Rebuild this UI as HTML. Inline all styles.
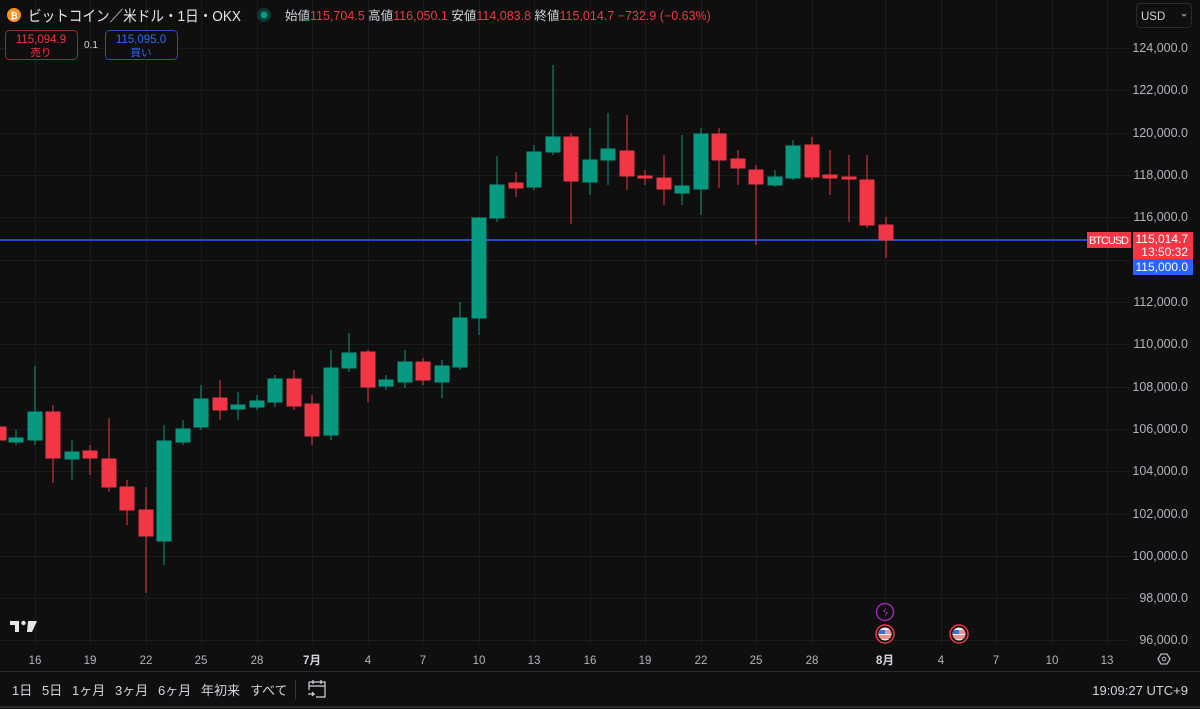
<!DOCTYPE html>
<html><head><meta charset="utf-8"><style>
html,body{margin:0;padding:0;background:#0f0f0f;width:1200px;height:709px;overflow:hidden;font-family:"Liberation Sans","Noto Sans CJK JP",sans-serif;color:#d1d4dc}
.a{position:absolute}
</style></head><body>
<svg class="a" style="left:0;top:0" width="1200" height="709" xmlns="http://www.w3.org/2000/svg" font-family="Liberation Sans, Noto Sans CJK JP, sans-serif">
<g stroke="#1b1b1b" stroke-width="1">
<line x1="0" x2="1130" y1="48.5" y2="48.5"/><line x1="0" x2="1130" y1="90.5" y2="90.5"/><line x1="0" x2="1130" y1="133.5" y2="133.5"/><line x1="0" x2="1130" y1="175.5" y2="175.5"/><line x1="0" x2="1130" y1="217.5" y2="217.5"/><line x1="0" x2="1130" y1="260.5" y2="260.5"/><line x1="0" x2="1130" y1="302.5" y2="302.5"/><line x1="0" x2="1130" y1="344.5" y2="344.5"/><line x1="0" x2="1130" y1="387.5" y2="387.5"/><line x1="0" x2="1130" y1="429.5" y2="429.5"/><line x1="0" x2="1130" y1="471.5" y2="471.5"/><line x1="0" x2="1130" y1="514.5" y2="514.5"/><line x1="0" x2="1130" y1="556.5" y2="556.5"/><line x1="0" x2="1130" y1="598.5" y2="598.5"/><line x1="0" x2="1130" y1="640.5" y2="640.5"/>
<line y1="0" y2="645" x1="35.5" x2="35.5"/><line y1="0" y2="645" x1="90.5" x2="90.5"/><line y1="0" y2="645" x1="146.5" x2="146.5"/><line y1="0" y2="645" x1="201.5" x2="201.5"/><line y1="0" y2="645" x1="257.5" x2="257.5"/><line y1="0" y2="645" x1="312.5" x2="312.5"/><line y1="0" y2="645" x1="368.5" x2="368.5"/><line y1="0" y2="645" x1="423.5" x2="423.5"/><line y1="0" y2="645" x1="479.5" x2="479.5"/><line y1="0" y2="645" x1="534.5" x2="534.5"/><line y1="0" y2="645" x1="590.5" x2="590.5"/><line y1="0" y2="645" x1="645.5" x2="645.5"/><line y1="0" y2="645" x1="701.5" x2="701.5"/><line y1="0" y2="645" x1="756.5" x2="756.5"/><line y1="0" y2="645" x1="812.5" x2="812.5"/><line y1="0" y2="645" x1="885.5" x2="885.5"/><line y1="0" y2="645" x1="941.5" x2="941.5"/><line y1="0" y2="645" x1="996.5" x2="996.5"/><line y1="0" y2="645" x1="1052.5" x2="1052.5"/><line y1="0" y2="645" x1="1107.5" x2="1107.5"/>
</g>
<line x1="0" x2="1130" y1="240" y2="240" stroke="#2962ff" stroke-width="1.5"/>
<g fill="#f23645" stroke="#f23645" stroke-width="1">
<rect x="-4" y="427" width="10" height="13"/>
<line x1="53" x2="53" y1="405" y2="483"/><rect x="46" y="412" width="14" height="46"/>
<line x1="90" x2="90" y1="445" y2="475"/><rect x="83" y="451" width="14" height="7"/>
<line x1="109" x2="109" y1="418" y2="492"/><rect x="102" y="459" width="14" height="28"/>
<line x1="127" x2="127" y1="480" y2="525"/><rect x="120" y="487" width="14" height="23"/>
<line x1="146" x2="146" y1="487" y2="593"/><rect x="139" y="510" width="14" height="26"/>
<line x1="220" x2="220" y1="380" y2="420"/><rect x="213" y="398" width="14" height="12"/>
<line x1="294" x2="294" y1="370" y2="410"/><rect x="287" y="379" width="14" height="27"/>
<line x1="312" x2="312" y1="395" y2="445"/><rect x="305" y="404" width="14" height="32"/>
<line x1="368" x2="368" y1="350" y2="402"/><rect x="361" y="352" width="14" height="35"/>
<line x1="423" x2="423" y1="358" y2="385"/><rect x="416" y="362" width="14" height="18"/>
<line x1="516" x2="516" y1="172" y2="197"/><rect x="509" y="183" width="14" height="5"/>
<line x1="571" x2="571" y1="133" y2="224"/><rect x="564" y="137" width="14" height="44"/>
<line x1="627" x2="627" y1="115" y2="190"/><rect x="620" y="151" width="14" height="25"/>
<line x1="645" x2="645" y1="170" y2="185"/><rect x="638" y="176" width="14" height="2"/>
<line x1="664" x2="664" y1="155" y2="205"/><rect x="657" y="178" width="14" height="11"/>
<line x1="719" x2="719" y1="128" y2="188"/><rect x="712" y="134" width="14" height="26"/>
<line x1="738" x2="738" y1="150" y2="185"/><rect x="731" y="159" width="14" height="9"/>
<line x1="756" x2="756" y1="165" y2="245"/><rect x="749" y="170" width="14" height="14"/>
<line x1="812" x2="812" y1="137" y2="180"/><rect x="805" y="145" width="14" height="32"/>
<line x1="830" x2="830" y1="150" y2="195"/><rect x="823" y="175" width="14" height="3"/>
<line x1="849" x2="849" y1="155" y2="222"/><rect x="842" y="177" width="14" height="2"/>
<line x1="867" x2="867" y1="155" y2="228"/><rect x="860" y="180" width="14" height="45"/>
<line x1="886" x2="886" y1="217" y2="258"/><rect x="879" y="225" width="14" height="15"/>
</g>
<g fill="#089981" stroke="#089981" stroke-width="1">
<line x1="16" x2="16" y1="430" y2="445"/><rect x="9" y="438" width="14" height="4"/>
<line x1="35" x2="35" y1="366" y2="445"/><rect x="28" y="412" width="14" height="28"/>
<line x1="72" x2="72" y1="440" y2="480"/><rect x="65" y="452" width="14" height="7"/>
<line x1="164" x2="164" y1="425" y2="565"/><rect x="157" y="441" width="14" height="100"/>
<line x1="183" x2="183" y1="420" y2="445"/><rect x="176" y="429" width="14" height="13"/>
<line x1="201" x2="201" y1="385" y2="430"/><rect x="194" y="399" width="14" height="28"/>
<line x1="238" x2="238" y1="392" y2="420"/><rect x="231" y="405" width="14" height="4"/>
<line x1="257" x2="257" y1="395" y2="410"/><rect x="250" y="401" width="14" height="6"/>
<line x1="275" x2="275" y1="375" y2="407"/><rect x="268" y="379" width="14" height="23"/>
<line x1="331" x2="331" y1="350" y2="440"/><rect x="324" y="368" width="14" height="67"/>
<line x1="349" x2="349" y1="333" y2="372"/><rect x="342" y="353" width="14" height="15"/>
<line x1="386" x2="386" y1="375" y2="390"/><rect x="379" y="380" width="14" height="6"/>
<line x1="405" x2="405" y1="350" y2="388"/><rect x="398" y="362" width="14" height="20"/>
<line x1="442" x2="442" y1="360" y2="398"/><rect x="435" y="366" width="14" height="16"/>
<line x1="460" x2="460" y1="302" y2="370"/><rect x="453" y="318" width="14" height="49"/>
<line x1="479" x2="479" y1="217" y2="335"/><rect x="472" y="218" width="14" height="100"/>
<line x1="497" x2="497" y1="156" y2="222"/><rect x="490" y="185" width="14" height="33"/>
<line x1="534" x2="534" y1="145" y2="190"/><rect x="527" y="152" width="14" height="35"/>
<line x1="553" x2="553" y1="65" y2="155"/><rect x="546" y="137" width="14" height="15"/>
<line x1="590" x2="590" y1="128" y2="195"/><rect x="583" y="160" width="14" height="22"/>
<line x1="608" x2="608" y1="113" y2="185"/><rect x="601" y="149" width="14" height="11"/>
<line x1="682" x2="682" y1="135" y2="205"/><rect x="675" y="186" width="14" height="7"/>
<line x1="701" x2="701" y1="128" y2="215"/><rect x="694" y="134" width="14" height="55"/>
<line x1="775" x2="775" y1="170" y2="187"/><rect x="768" y="177" width="14" height="8"/>
<line x1="793" x2="793" y1="140" y2="180"/><rect x="786" y="146" width="14" height="32"/>
</g>
<g fill="#b2b5be" font-size="12.5" text-anchor="end">
<text x="1188" y="52">124,000.0</text><text x="1188" y="94">122,000.0</text><text x="1188" y="137">120,000.0</text><text x="1188" y="179">118,000.0</text><text x="1188" y="221">116,000.0</text><text x="1188" y="306">112,000.0</text><text x="1188" y="348">110,000.0</text><text x="1188" y="391">108,000.0</text><text x="1188" y="433">106,000.0</text><text x="1188" y="475">104,000.0</text><text x="1188" y="518">102,000.0</text><text x="1188" y="560">100,000.0</text><text x="1188" y="602">98,000.0</text><text x="1188" y="644">96,000.0</text>
</g>
<rect x="1087" y="232" width="44" height="16" fill="#f23645"/>
<text x="1109" y="244" fill="#fff" font-size="11" text-anchor="middle" textLength="40">BTCUSD</text>
<rect x="1133" y="232" width="60" height="27" fill="#f23645"/>
<text x="1188" y="243" fill="#fff" font-size="12" text-anchor="end">115,014.7</text>
<text x="1188" y="256" fill="#fff" font-size="12" text-anchor="end">13:50:32</text>
<rect x="1133" y="259" width="60" height="16" fill="#2962ff"/>
<text x="1188" y="271" fill="#fff" font-size="12" text-anchor="end">115,000.0</text>
<rect x="1136.5" y="3.5" width="55" height="24" rx="4" fill="none" stroke="#2a2a2a"/>
<text x="1141" y="20" fill="#d1d4dc" font-size="11.5">USD</text>
<path d="M1182 14l2 2 2-2" stroke="#b2b5be" fill="none"/>
<g fill="#b2b5be" font-size="11.5" text-anchor="middle">
<text x="35" y="664">16</text><text x="90" y="664">19</text><text x="146" y="664">22</text><text x="201" y="664">25</text><text x="257" y="664">28</text><text x="312" y="664" font-weight="bold" fill="#d1d4dc">7月</text><text x="368" y="664">4</text><text x="423" y="664">7</text><text x="479" y="664">10</text><text x="534" y="664">13</text><text x="590" y="664">16</text><text x="645" y="664">19</text><text x="701" y="664">22</text><text x="756" y="664">25</text><text x="812" y="664">28</text><text x="885" y="664" font-weight="bold" fill="#d1d4dc">8月</text><text x="941" y="664">4</text><text x="996" y="664">7</text><text x="1052" y="664">10</text><text x="1107" y="664">13</text>
</g>
<path d="M1158 659l3-5h6l3 5-3 5h-6z" fill="none" stroke="#b2b5be" stroke-width="1.3"/>
<circle cx="1164" cy="659" r="1.8" fill="none" stroke="#b2b5be"/>
<line x1="0" x2="1200" y1="671.5" y2="671.5" stroke="#2a2a2a"/>
<line x1="0" x2="1200" y1="707" y2="707" stroke="#2a2a2a" stroke-width="2"/>
<circle cx="885" cy="612" r="8.5" fill="#0f0f0f" stroke="#9c27b0" stroke-width="1.5"/>
<path d="M886 607l-3 5h3l-1 5 3-5h-3z" fill="#9c27b0"/>
<circle cx="885" cy="634" r="9" fill="#0f0f0f" stroke="#f23645" stroke-width="1.5"/>
<circle cx="885" cy="634" r="6.5" fill="#eee"/><path d="M879 630h6v4h-6z" fill="#3c6fd8"/><path d="M885 631h6M885 633h6M879 636h12M880 638h10" stroke="#e53935" stroke-width="1"/>
<circle cx="959" cy="634" r="9" fill="#0f0f0f" stroke="#f23645" stroke-width="1.5"/>
<circle cx="959" cy="634" r="6.5" fill="#eee"/><path d="M953 630h6v4h-6z" fill="#3c6fd8"/><path d="M959 631h6M959 633h6M953 636h12M954 638h10" stroke="#e53935" stroke-width="1"/>
<path d="M10 621h9v11h-4v-7h-5z" fill="#e6e6e6"/><circle cx="23.5" cy="623" r="2.2" fill="#e6e6e6"/><path d="M28 621h9l-5 11h-5z" fill="#e6e6e6"/>
<g fill="#d1d4dc" font-size="13">
<text x="12" y="695">1日</text><text x="42" y="695">5日</text><text x="72" y="695">1ヶ月</text><text x="115" y="695">3ヶ月</text><text x="158" y="695">6ヶ月</text><text x="201" y="695">年初来</text><text x="250" y="695">すべて</text>
<text x="1188" y="695" text-anchor="end">19:09:27 UTC+9</text>
</g>
<line x1="295.5" x2="295.5" y1="680" y2="700" stroke="#333"/>
<path d="M309 682h16v15h-9M309 682v8M309 686h16M313 680v4M321 680v4M308 694h6l-2-2M314 694l-2 2" fill="none" stroke="#d1d4dc" stroke-width="1.2"/>
<circle cx="14" cy="15" r="7" fill="#f7931a"/><text x="14" y="19" fill="#fff" font-size="9" text-anchor="middle" font-weight="bold">₿</text>
<text x="28" y="21" fill="#e6e6e6" font-size="15" textLength="213" lengthAdjust="spacingAndGlyphs">ビットコイン／米ドル・1日・OKX</text>
<circle cx="264" cy="15" r="7" fill="#0b3a33"/><circle cx="264" cy="15" r="3.5" fill="#089981"/>
<text x="285" y="20" font-size="12.5" fill="#d1d4dc">始値<tspan fill="#f23645">115,704.5</tspan> 高値<tspan fill="#f23645">116,050.1</tspan> 安値<tspan fill="#f23645">114,083.8</tspan> 終値<tspan fill="#f23645">115,014.7 −732.9 (−0.63%)</tspan></text>
<rect x="5.5" y="30.5" width="72" height="29" rx="4" fill="#0f0f0f" stroke="#9a2a32"/>
<text x="41" y="43" font-size="11.5" fill="#f23645" text-anchor="middle">115,094.9</text><text x="41" y="56" font-size="10.5" fill="#f23645" text-anchor="middle">売り</text>
<text x="91" y="48" font-size="10" fill="#d1d4dc" text-anchor="middle">0.1</text>
<rect x="105.5" y="30.5" width="72" height="29" rx="4" fill="#0f0f0f" stroke="#2450b8"/>
<text x="141" y="43" font-size="11.5" fill="#2f6bff" text-anchor="middle">115,095.0</text><text x="141" y="56" font-size="10.5" fill="#2f6bff" text-anchor="middle">買い</text>
</svg>
</body></html>
